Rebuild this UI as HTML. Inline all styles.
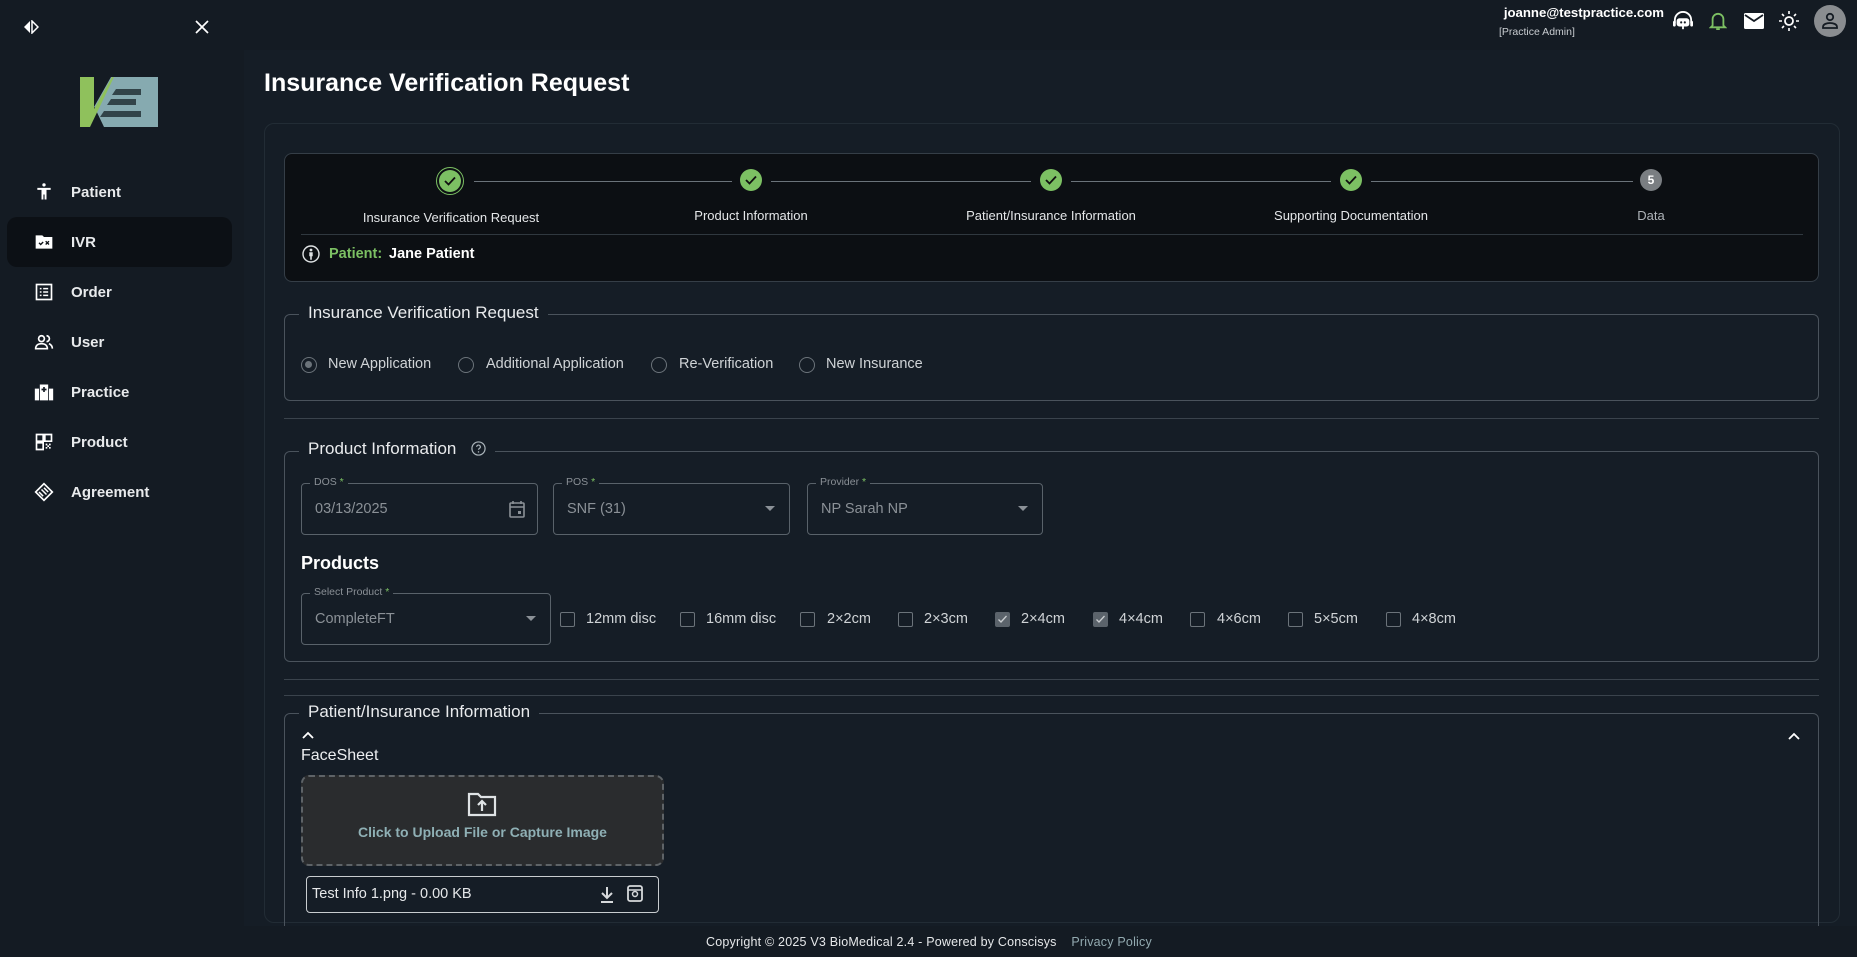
<!DOCTYPE html>
<html><head><meta charset="utf-8"><style>
*{box-sizing:border-box;margin:0;padding:0}
body{width:1857px;height:957px;overflow:hidden;background:#141b23;font-family:"Liberation Sans",sans-serif;color:#e6e8ea;position:relative}
.abs{position:absolute}
.side{left:0;top:0;width:244px;height:957px;background:#141b23}
.main{left:244px;top:50px;width:1613px;height:876px;background:#151d26}
.nav{position:absolute;left:0;width:244px;height:50px;display:flex;align-items:center;font-size:15px;font-weight:bold;color:#e8eaec}
.nav svg{position:absolute;left:34px}
.nav span{position:absolute;left:71px}
.box{position:absolute;border:1px solid #4a535c;border-radius:6px}
.legend{position:absolute;background:#151d26;padding:0 9px;font-size:17px;color:#e9ebed}
.radio{position:absolute;width:16px;height:16px;border:1.5px solid #6b737a;border-radius:50%}
.lbl{position:absolute;font-size:14.5px;color:#cfd3d6}
.cb{position:absolute;width:15px;height:15px;border:1.5px solid #6b737a;border-radius:2px}
.cb.on{background:#5b636b;border-color:#5b636b}
.step{position:absolute;width:22px;height:22px;border-radius:50%;background:#7cc063;display:flex;align-items:center;justify-content:center}
.slbl{position:absolute;font-size:13px;color:#e4e6e8;transform:translateX(-50%);white-space:nowrap}
.sline{position:absolute;height:1px;background:#6b737a;top:181px}
.field{position:absolute;border:1px solid #59626a;border-radius:4px;height:52px}
.field .fl{position:absolute;top:-8px;left:8px;background:#151d26;padding:0 4px;font-size:10.5px;color:#8a9096}
.field .fl b{color:#7cc063;font-weight:normal}
.field .fv{position:absolute;left:13px;top:17px;font-size:14.5px;color:#8b9197}
.tri{position:absolute;right:14px;top:22px;width:0;height:0;border-left:5px solid transparent;border-right:5px solid transparent;border-top:5px solid #8b9197}
</style></head><body>
<div class="abs side"></div>
<div class="abs main"></div>
<svg class="abs" style="left:23px;top:20px" width="16" height="14" viewBox="0 0 16 14"><path d="M7 1L1 7l6 6z" fill="#fff"/><path d="M9 1l6 6-6 6z" fill="none" stroke="#fff" stroke-width="1.5"/></svg>
<svg class="abs" style="left:195px;top:20px" width="14" height="14" viewBox="0 0 14 14"><path d="M1 1l12 12M13 1L1 13" stroke="#fff" stroke-width="1.7"/></svg>
<svg class="abs" style="left:80px;top:77px" width="78" height="50" viewBox="0 0 78 50"><path d="M0 0h14v30L31 0h47v50H24z" fill="#86aab0"/><path d="M0 0h14v32L32 0h2L10 50H0z" fill="#8fc15c"/><path d="M36 12h25v6H32zM31 22h25v6H27zM24 34h37v6H20z" fill="#1d2a30" opacity=".8"/></svg>
<div class="abs" style="left:7px;top:217px;width:225px;height:50px;background:#0c1015;border-radius:10px"></div>
<div class="nav" style="top:167px"><svg width="20" height="20" viewBox="0 0 24 24"><circle cx="12" cy="3.5" r="2" fill="#fff"/><path d="M4 7h16v2.5h-5V21h-2.3v-6h-1.4v6H9V9.5H4z" fill="#fff"/></svg><span>Patient</span></div>
<div class="nav" style="top:217px"><svg width="20" height="20" viewBox="0 0 24 24"><path d="M2 4h8l2 2h10v14H2z" fill="#fff"/><path d="M6 13l2 2 3-3M14 11l4 4M18 11l-4 4" stroke="#0c1015" stroke-width="1.6" fill="none"/></svg><span>IVR</span></div>
<div class="nav" style="top:267px"><svg width="20" height="20" viewBox="0 0 24 24"><rect x="3" y="3" width="18" height="18" fill="none" stroke="#fff" stroke-width="2"/><path d="M7 8h2M11 8h6M7 12h2M11 12h6M7 16h2M11 16h6" stroke="#fff" stroke-width="1.8"/></svg><span>Order</span></div>
<div class="nav" style="top:317px"><svg width="20" height="20" viewBox="0 0 24 24"><circle cx="9" cy="8" r="3.5" fill="none" stroke="#fff" stroke-width="2"/><path d="M2 20c0-4 3-6 7-6s7 2 7 6z" fill="none" stroke="#fff" stroke-width="2"/><path d="M15 4.5a3.5 3.5 0 010 7M18 14c2 1 4 3 4 6" stroke="#fff" stroke-width="2" fill="none"/></svg><span>User</span></div>
<div class="nav" style="top:367px"><svg width="20" height="20" viewBox="0 0 24 24"><path d="M1 8h5v14H1zM18 8h5v14h-5zM7 3h10v19H7z" fill="#fff"/><path d="M12 6v6M9 9h6" stroke="#141b23" stroke-width="2"/></svg><span>Practice</span></div>
<div class="nav" style="top:417px"><svg width="20" height="20" viewBox="0 0 24 24"><path d="M3 3h8v8H3zM13 3h8v8h-8zM3 13h8v8H3z" fill="none" stroke="#fff" stroke-width="2"/><path d="M14 14h2v2h-2zM18 14h2v2h-2zM16 16h2v2h-2zM14 18h2v2h-2zM18 18h2v2h-2z" fill="#fff"/></svg><span>Product</span></div>
<div class="nav" style="top:467px"><svg width="20" height="20" viewBox="0 0 24 24"><path d="M12 2l10 10-10 10L2 12z" fill="none" stroke="#fff" stroke-width="2"/><path d="M6 12l5 5M9 9l6 6M12 7l5 5" stroke="#fff" stroke-width="1.8"/></svg><span>Agreement</span></div>
<div class="abs" style="left:1499px;top:5px;width:165px;font-size:13.2px;font-weight:bold;color:#fff;white-space:nowrap;text-align:right">joanne@testpractice.com</div>
<div class="abs" style="left:1499px;top:26px;font-size:10.5px;color:#c8ccd0">[Practice Admin]</div>
<svg class="abs" style="left:1672px;top:11px" width="22" height="20" viewBox="0 0 24 22"><path d="M3 13V10a9 9 0 0118 0v3" stroke="#fff" stroke-width="2" fill="none"/><rect x="5" y="8" width="14" height="9" rx="3" fill="#fff"/><circle cx="10" cy="12.5" r="1.2" fill="#141b23"/><circle cx="14" cy="12.5" r="1.2" fill="#141b23"/><rect x="1" y="11" width="3" height="6" rx="1" fill="#fff"/><rect x="20" y="11" width="3" height="6" rx="1" fill="#fff"/><path d="M12 17v3" stroke="#fff" stroke-width="2"/></svg>
<svg class="abs" style="left:1709px;top:11px" width="18" height="20" viewBox="0 0 20 22"><path d="M4 16V9a6 6 0 0112 0v7l2 2H2z" stroke="#7cc063" stroke-width="2" fill="none"/><path d="M8 20h4" stroke="#7cc063" stroke-width="2"/></svg>
<svg class="abs" style="left:1744px;top:13px" width="20" height="16" viewBox="0 0 20 16"><rect width="20" height="16" rx="1.5" fill="#fff"/><path d="M1 2l9 6 9-6" stroke="#141b23" stroke-width="1.8" fill="none"/></svg>
<svg class="abs" style="left:1779px;top:11px" width="20" height="20" viewBox="0 0 20 20"><circle cx="10" cy="10" r="4" stroke="#fff" stroke-width="1.8" fill="none"/><path d="M10 0v3M10 17v3M0 10h3M17 10h3M3 3l2 2M15 15l2 2M17 3l-2 2M3 17l2-2" stroke="#fff" stroke-width="1.6"/></svg>
<div class="abs" style="left:1814px;top:5px;width:32px;height:32px;border-radius:50%;background:#8a8d90"></div>
<svg class="abs" style="left:1820px;top:11px" width="20" height="20" viewBox="0 0 20 20"><circle cx="10" cy="6" r="3.2" stroke="#141b23" stroke-width="1.8" fill="none"/><path d="M3 17v-1c0-3 4-4 7-4s7 1 7 4v1z" stroke="#141b23" stroke-width="1.8" fill="none"/></svg>
<div class="abs" style="left:264px;top:69px;font-size:25px;font-weight:bold;color:#fff">Insurance Verification Request</div>
<div class="box" style="left:264px;top:123px;width:1576px;height:800px;border-color:#222c35;border-radius:10px"></div>
<div class="box" style="left:284px;top:153px;width:1535px;height:129px;background:#0c0f13;border-color:#353e47;border-radius:8px"></div>
<div class="sline" style="left:474px;width:258px"></div>
<div class="sline" style="left:771px;width:260px"></div>
<div class="sline" style="left:1071px;width:260px"></div>
<div class="sline" style="left:1371px;width:262px"></div>
<div class="abs" style="left:436px;top:167px;width:28px;height:28px;border-radius:50%;border:1.5px solid #7cc063"></div>
<div class="step" style="left:439px;top:170px"><svg width="12" height="10" viewBox="0 0 12 10"><path d="M1 5l3.5 3.5L11 1.5" stroke="#111" stroke-width="1.8" fill="none"/></svg></div>
<div class="step" style="left:740px;top:169px"><svg width="12" height="10" viewBox="0 0 12 10"><path d="M1 5l3.5 3.5L11 1.5" stroke="#111" stroke-width="1.8" fill="none"/></svg></div>
<div class="step" style="left:1040px;top:169px"><svg width="12" height="10" viewBox="0 0 12 10"><path d="M1 5l3.5 3.5L11 1.5" stroke="#111" stroke-width="1.8" fill="none"/></svg></div>
<div class="step" style="left:1340px;top:169px"><svg width="12" height="10" viewBox="0 0 12 10"><path d="M1 5l3.5 3.5L11 1.5" stroke="#111" stroke-width="1.8" fill="none"/></svg></div>
<div class="step" style="left:1640px;top:169px;background:#7a7e82;font-size:12px;font-weight:bold;color:#fff">5</div>
<div class="slbl" style="left:451px;top:210px">Insurance Verification Request</div>
<div class="slbl" style="left:751px;top:208px">Product Information</div>
<div class="slbl" style="left:1051px;top:208px">Patient/Insurance Information</div>
<div class="slbl" style="left:1351px;top:208px">Supporting Documentation</div>
<div class="slbl" style="left:1651px;top:208px;color:#aeb3b8">Data</div>
<div class="abs" style="left:301px;top:234px;width:1502px;height:1px;background:#30383f"></div>
<svg class="abs" style="left:302px;top:245px" width="18" height="18" viewBox="0 0 18 18"><circle cx="9" cy="9" r="8" stroke="#dfe2e4" stroke-width="1.4" fill="none"/><circle cx="9" cy="5" r="1.4" fill="#dfe2e4"/><path d="M7.3 7.3h3.4v4H9.8v3.5H8.2v-3.5h-.9z" fill="#dfe2e4"/></svg>
<div class="abs" style="left:329px;top:246px;font-size:14.5px;font-weight:bold;color:#7cc063">Patient:</div>
<div class="abs" style="left:389px;top:246px;font-size:14.5px;font-weight:bold;color:#fff">Jane Patient</div>
<div class="box" style="left:284px;top:314px;width:1535px;height:87px"></div>
<div class="legend" style="left:299px;top:303px">Insurance Verification Request</div>
<div class="radio" style="left:301px;top:357px"><div style="position:absolute;left:3px;top:3px;width:7px;height:7px;border-radius:50%;background:#6b737a"></div></div>
<div class="lbl" style="left:328px;top:356px">New Application</div>
<div class="radio" style="left:458px;top:357px"></div><div class="lbl" style="left:486px;top:356px">Additional Application</div>
<div class="radio" style="left:651px;top:357px"></div><div class="lbl" style="left:679px;top:356px">Re-Verification</div>
<div class="radio" style="left:799px;top:357px"></div><div class="lbl" style="left:826px;top:356px">New Insurance</div>
<div class="abs" style="left:284px;top:418px;width:1535px;height:1px;background:#3a434c"></div>
<div class="box" style="left:284px;top:451px;width:1535px;height:211px"></div>
<div class="legend" style="left:299px;top:439px">Product Information <svg style="margin-left:10px;vertical-align:-2px" width="15" height="15" viewBox="0 0 16 16"><circle cx="8" cy="8" r="7" stroke="#aab4ba" stroke-width="1.3" fill="none"/><path d="M6 6.2a2 2 0 114 .3c0 1.2-2 1.5-2 2.8" stroke="#aab4ba" stroke-width="1.3" fill="none"/><circle cx="8" cy="11.6" r=".8" fill="#aab4ba"/></svg></div>
<div class="field" style="left:301px;top:483px;width:237px"><div class="fl">DOS <b>*</b></div><div class="fv">03/13/2025</div><svg style="position:absolute;right:12px;top:16px" width="16" height="18" viewBox="0 0 16 18"><rect x="1" y="3" width="14" height="14" rx="1" stroke="#8b9197" stroke-width="1.6" fill="none"/><path d="M1 7h14M4 1v3M12 1v3" stroke="#8b9197" stroke-width="1.6"/><rect x="9" y="11" width="3" height="3" fill="#8b9197"/></svg></div>
<div class="field" style="left:553px;top:483px;width:237px"><div class="fl">POS <b>*</b></div><div class="fv">SNF (31)</div><div class="tri"></div></div>
<div class="field" style="left:807px;top:483px;width:236px"><div class="fl">Provider <b>*</b></div><div class="fv">NP Sarah NP</div><div class="tri"></div></div>
<div class="abs" style="left:301px;top:553px;font-size:18px;font-weight:bold;color:#fff">Products</div>
<div class="field" style="left:301px;top:593px;width:250px"><div class="fl">Select Product <b>*</b></div><div class="fv">CompleteFT</div><div class="tri"></div></div>
<div class="cb" style="left:560px;top:612px"></div><div class="lbl" style="left:586px;top:611px">12mm disc</div>
<div class="cb" style="left:680px;top:612px"></div><div class="lbl" style="left:706px;top:611px">16mm disc</div>
<div class="cb" style="left:800px;top:612px"></div><div class="lbl" style="left:827px;top:611px">2×2cm</div>
<div class="cb" style="left:898px;top:612px"></div><div class="lbl" style="left:924px;top:611px">2×3cm</div>
<div class="cb on" style="left:995px;top:612px"><svg style="position:absolute;left:1px;top:1px" width="11" height="11" viewBox="0 0 11 11"><path d="M1.5 5.5l2.5 2.5 5.5-6" stroke="#c9cdd0" stroke-width="1.3" fill="none"/></svg></div><div class="lbl" style="left:1021px;top:611px">2×4cm</div>
<div class="cb on" style="left:1093px;top:612px"><svg style="position:absolute;left:1px;top:1px" width="11" height="11" viewBox="0 0 11 11"><path d="M1.5 5.5l2.5 2.5 5.5-6" stroke="#c9cdd0" stroke-width="1.3" fill="none"/></svg></div><div class="lbl" style="left:1119px;top:611px">4×4cm</div>
<div class="cb" style="left:1190px;top:612px"></div><div class="lbl" style="left:1217px;top:611px">4×6cm</div>
<div class="cb" style="left:1288px;top:612px"></div><div class="lbl" style="left:1314px;top:611px">5×5cm</div>
<div class="cb" style="left:1386px;top:612px"></div><div class="lbl" style="left:1412px;top:611px">4×8cm</div>
<div class="abs" style="left:284px;top:679px;width:1535px;height:1px;background:#3a434c"></div>
<div class="abs" style="left:284px;top:695px;width:1535px;height:1px;background:#3a434c"></div>
<div class="box" style="left:284px;top:713px;width:1535px;height:230px"></div>
<div class="legend" style="left:299px;top:702px">Patient/Insurance Information</div>
<svg class="abs" style="left:302px;top:731px" width="12" height="8" viewBox="0 0 12 8"><path d="M1 7l5-5 5 5" stroke="#fff" stroke-width="1.8" fill="none"/></svg>
<svg class="abs" style="left:1788px;top:732px" width="12" height="8" viewBox="0 0 12 8"><path d="M1 7l5-5 5 5" stroke="#fff" stroke-width="1.8" fill="none"/></svg>
<div class="abs" style="left:301px;top:747px;font-size:16px;color:#eceef0">FaceSheet</div>
<div class="abs" style="left:301px;top:775px;width:363px;height:91px;background:#2a2c2e;border:2px dashed #5e6367;border-radius:8px"></div>
<svg class="abs" style="left:467px;top:791px" width="30" height="26" viewBox="0 0 30 26"><path d="M2 3h9l3 3h14v18H2z" stroke="#dfe3e5" stroke-width="2.2" fill="none"/><path d="M15 20v-9M11 14l4-4 4 4" stroke="#dfe3e5" stroke-width="2.2" fill="none"/></svg>
<div class="abs" style="left:301px;top:824px;width:363px;text-align:center;font-size:14px;font-weight:bold;color:#8fb0b5">Click to Upload File or Capture Image</div>
<div class="abs" style="left:306px;top:876px;width:353px;height:37px;border:1px solid #c9cdd0;border-radius:4px"></div>
<div class="abs" style="left:312px;top:886px;font-size:14.5px;color:#e6e8ea">Test Info 1.png - 0.00 KB</div>
<svg class="abs" style="left:600px;top:886px" width="14" height="17" viewBox="0 0 14 17"><path d="M7 1v10M2 7l5 5 5-5M1 16h12" stroke="#d6d9db" stroke-width="2" fill="none"/></svg>
<svg class="abs" style="left:627px;top:885px" width="16" height="17" viewBox="0 0 16 17"><rect x="1" y="1" width="14" height="15" rx="2" stroke="#d6d9db" stroke-width="1.8" fill="none"/><circle cx="8" cy="9" r="2.5" stroke="#d6d9db" stroke-width="1.5" fill="none"/><path d="M1 5h14" stroke="#d6d9db" stroke-width="1.5"/></svg>
<div class="abs" style="left:244px;top:926px;width:1613px;height:31px;background:#141b23"></div>
<div class="abs" style="left:706px;top:935px;font-size:12.5px;color:#e6e8ea;letter-spacing:0.2px">Copyright © 2025 V3 BioMedical 2.4 - Powered by Conscisys&nbsp;&nbsp;&nbsp; <span style="color:#93aab0">Privacy Policy</span></div>
</body></html>
